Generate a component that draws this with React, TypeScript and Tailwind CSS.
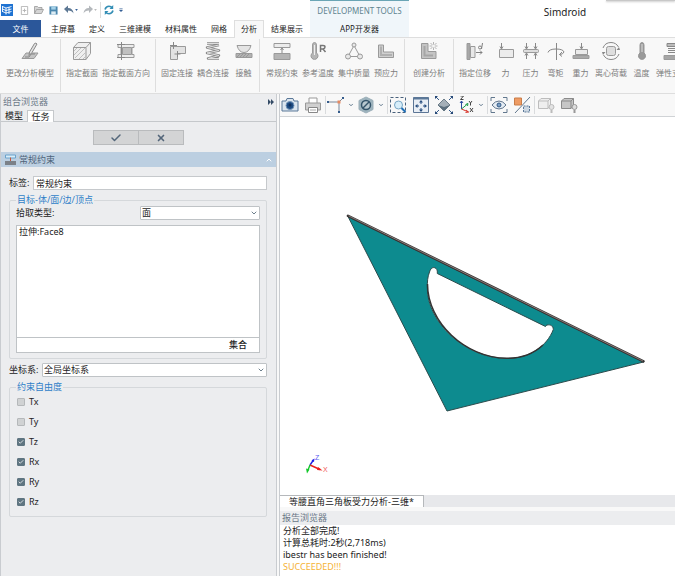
import { useState } from "react";
import type { ReactNode } from "react";
import clsx from "clsx";
import { Check, ChevronDown, ChevronUp, X } from "lucide-react";

const TABS = ["主屏幕", "定义", "三维建模", "材料属性", "网格", "分析", "结果展示"];

type Tool = { label: string; icon: ReactNode };

function Glyph({ children }: { children: ReactNode }) {
  return (
    <svg viewBox="0 0 20 20" className="size-5 shrink-0" fill="none" stroke="#9a9a9a" strokeWidth="1">
      {children}
    </svg>
  );
}

const GROUPS: { pad: string; tools: Tool[] }[] = [
  {
    pad: "px-[4px]",
    tools: [
      {
        label: "更改分析模型",
        icon: (
          <Glyph>
            <path d="M2 17.500 6 12h12l-4 5.500z" fill="#c4c4c4" />
            <path d="M5 16h4l2-3h4" stroke="#888" />
            <path d="m9 14.500.5-3.500L14.500 2.500q1.500-1 2.500.5L12 11.500z" fill="#e2e2e2" stroke="#888" />
          </Glyph>
        ),
      },
    ],
  },
  {
    pad: "px-[3px]",
    tools: [
      {
        label: "指定截面",
        icon: (
          <Glyph>
            <path d="M1.500 6.500 6 1.500h12.500v11L14 18.500H1.500z" fill="#efefef" />
            <path d="M1.500 6.500H14v12M14 6.500l4.500-5" />
            <path d="m2 10 3-3M2 14l7-7M3 17l10-10M7 18l7-7M11 18l3-3" stroke="#c0c0c0" />
          </Glyph>
        ),
      },
      {
        label: "指定截面方向",
        icon: (
          <Glyph>
            <path d="M2 3.500h16v3h-2v7h2v3H2v-3h3v-7H2z" fill="#ededed" />
            <path d="M6.500 6.500h9v7h-9z" fill="#c0c0c0" />
            <path d="M5.500 1v18M1 16.500h8M1 3.500h8" stroke="#888" />
          </Glyph>
        ),
      },
    ],
  },
  {
    pad: "px-[3px]",
    tools: [
      {
        label: "固定连接",
        icon: (
          <Glyph>
            <path d="M3.500 5.500h15v7h-8v6h-7z" fill="#e2e2e2" />
            <path d="M6.500 1v7M3 4.500h7M10.500 10v6M7.500 13h6" stroke="#888" />
          </Glyph>
        ),
      },
      {
        label: "耦合连接",
        icon: (
          <Glyph>
            <path d="M4 2.500h12M16 4 4 6.500l12 3L4 12l12 2.500L5 17.500h11" stroke="#8a8a8a" strokeWidth="2.500" strokeLinejoin="round" />
            <path d="M4 2.500h12M16 4 4 6.500l12 3L4 12l12 2.500L5 17.500h11" stroke="#ddd" strokeWidth="1" />
          </Glyph>
        ),
      },
      {
        label: "接触",
        icon: (
          <Glyph>
            <path d="M3 4.500h14q-2 7-7 7t-7-7z" fill="#e4e4e4" />
            <path d="M2 12.500h16v4H2z" fill="#b2b2b2" />
            <path d="m3 16 3-3m0 3 3-3m0 3 3-3m0 3 3-3" stroke="#999" />
          </Glyph>
        ),
      },
    ],
  },
  {
    pad: "px-[4px]",
    tools: [
      {
        label: "常规约束",
        icon: (
          <Glyph>
            <path d="M2 2.500h16v4H2z" fill="#ececec" />
            <path d="M2 12.500h16v6H2z" fill="#b4b4b4" />
            <path d="M10 12V7.500M8.500 9 10 7l1.500 2" stroke="#888" />
          </Glyph>
        ),
      },
      {
        label: "参考温度",
        icon: (
          <Glyph>
            <path d="M4.500 4q0-2.500 2-2.500t2 2.500v8a3.500 3.500 0 1 1-4 0z" fill="#b5b5b5" />
            <path d="M6.500 4v10" stroke="#eee" />
            <path d="M12.500 11V4.500h2.500q2 0 2 1.500t-2 2h-2.500M15 8l2.500 3" stroke="#777" strokeWidth="1.500" />
          </Glyph>
        ),
      },
      {
        label: "集中质量",
        icon: (
          <Glyph>
            <path d="m10 4.500-6 11h12z" />
            <circle cx="10" cy="4" r="2" fill="#e8e8e8" />
            <circle cx="4" cy="15.500" r="2.500" fill="#e8e8e8" />
            <circle cx="16" cy="15.500" r="2.500" fill="#e8e8e8" />
          </Glyph>
        ),
      },
      {
        label: "预应力",
        icon: (
          <Glyph>
            <path d="M2.500 4h5v7h10v5.500h-15z" fill="#d0d0d0" />
            <path d="M5 5.500v8.500h11" stroke="#b0b0b0" strokeWidth="2" />
          </Glyph>
        ),
      },
    ],
  },
  {
    pad: "px-[6px]",
    tools: [
      {
        label: "创建分析",
        icon: (
          <Glyph>
            <path d="M2.500 2.500H9v8h8v7H2.500z" fill="#c4c4c4" />
            <path d="M5.500 5v9.500H14" stroke="#a6a6a6" strokeWidth="2" />
            <path d="M14.500 1v8M10.500 5h8M11.500 2l6 6M17.500 2l-6 6" stroke="#b4b4b4" />
            <circle cx="14.500" cy="5" r="1.500" fill="#f5f5f5" stroke="none" />
          </Glyph>
        ),
      },
    ],
  },
  {
    pad: "px-[3px]",
    tools: [
      {
        label: "指定位移",
        icon: (
          <Glyph>
            <path d="M2 2.500h3v16H2z" fill="#a8a8a8" />
            <path d="M5.500 5.500H10v11H5.500z" fill="#e8e8e8" />
            <path d="M11 11.500h6M15 9.500l2 2-2 2M17.500 2l-1 6" stroke="#808080" />
            <circle cx="15" cy="6.500" r="1.500" stroke="#808080" />
          </Glyph>
        ),
      },
      {
        label: "力",
        icon: (
          <Glyph>
            <path d="M3.500 8.500h14v8h-14z" fill="#ececec" />
            <path d="M5.500 2v5M4 5.500 5.500 8 7 5.500" stroke="#888" />
          </Glyph>
        ),
      },
      {
        label: "压力",
        icon: (
          <Glyph>
            <rect x="2.500" y="8.500" width="15" height="3" rx="1" fill="#ddd" />
            <path d="M5.500 2v5M4 5.500 5.500 8 7 5.500M14.500 2v5M13 5.500 14.500 8 16 5.500M5.500 18v-5M4 14.500 5.500 12 7 14.500M14.500 18v-5M13 14.500l1.500-2.500 1.500 2.500" stroke="#888" />
          </Glyph>
        ),
      },
      {
        label: "弯矩",
        icon: (
          <Glyph>
            <path d="M10.500 2v17" stroke="#888" />
            <path d="M2 11.500Q3 8 10 8t8 3q-1 2.500-4.500 2.500M16 11l-2.500 2.500 2.500 2" stroke="#888" />
          </Glyph>
        ),
      },
      {
        label: "重力",
        icon: (
          <Glyph>
            <path d="M2 14.500h16v3H2z" fill="#aaa" />
            <path d="M4.500 8.500h12v5h-12z" fill="#ebebeb" />
            <path d="M10.500 2v5M9 5.500 10.500 8 12 5.500" stroke="#888" />
          </Glyph>
        ),
      },
      {
        label: "离心荷载",
        icon: (
          <Glyph>
            <rect x="5.500" y="5.500" width="9" height="9" rx="2" fill="#dedede" />
            <path d="M2 7q2-5.500 8-5.500 5 0 7.500 4.500M18 13q-2 5.500-8 5.500-5 0-7.500-4.500" stroke="#888" />
            <path d="M1 11h3.500L2 14zM19 9h-3.500L18 6z" fill="#888" stroke="none" />
          </Glyph>
        ),
      },
      {
        label: "温度",
        icon: (
          <Glyph>
            <path d="M8 4q0-2.500 2-2.500T12 4v8a3.500 3.500 0 1 1-4 0z" fill="#9a9a9a" stroke="#959595" />
            <path d="M10 3v8" stroke="#ddd" />
          </Glyph>
        ),
      },
      {
        label: "弹性支撑",
        icon: (
          <Glyph>
            <path d="M2 14.500h16v4H2z" fill="#a6a6a6" />
            <path d="M5 2.500h10v3H5zM6 7.500h8M6 9.500h8M6 11.500h8" fill="#bbb" stroke="#888" />
          </Glyph>
        ),
      },
    ],
  },
];

function QuickAccess() {
  return (
    <div className="flex h-5 items-center text-[#5d7894]">
      <svg viewBox="0 0 12 12" className="ml-px size-3">
        <path d="M0 0h12v12H0z" fill="#1f73d2" />
        <path d="M1.500 2.500 5 4l5.500-1.500M1.500 5 5 6.500 10.500 5M1.500 7.500 5 9l5.500-1.500M5 4v6.500M8 3v7M1.500 2v6" fill="none" stroke="#fff" strokeWidth=".9" />
      </svg>
      <svg viewBox="0 0 10 10" className="ml-[7px] size-[9px]" fill="none" stroke="#b3b3b3">
        <path d="M1.500.5h7v9h-7zM5 3v4M3 5h4" />
      </svg>
      <svg viewBox="0 0 10 10" className="ml-[5px] size-[10px]" fill="#d5d5d5" stroke="#999" strokeWidth=".8">
        <path d="M.5 8.500v-7h3l1 1H8v2M.5 8.500 2.500 4.500h7l-2 4z" />
      </svg>
      <svg viewBox="0 0 10 10" className="ml-[5px] size-[9px]">
        <path d="M.5.5h9v9h-9z" fill="#4a86ad" />
        <path d="M2.500.5h5V4h-5z" fill="#a4d1e8" />
        <path d="M2.500 6h5v3.500h-5z" fill="#dcecf4" />
      </svg>
      <svg viewBox="0 0 10 10" className="ml-[6px] size-[10px]" fill="currentColor">
        <path d="m0 4 4-3.500V3q5 0 5.500 5.500Q8 5.500 4 5.500V8z" />
      </svg>
      <Caret />
      <svg viewBox="0 0 10 10" className="ml-[5px] size-[10px]" fill="#b4b8bc">
        <path d="M10 4 6 .5V3Q1 3 .5 8.500 2 5.500 6 5.500V8z" />
      </svg>
      <Caret faded />
      <span className="ml-[3px] h-4 w-px bg-[#dcdcdc]" />
      <svg viewBox="0 0 10 10" className="ml-[3px] size-[10px]" fill="none" stroke="#338eb5" strokeWidth="1.600">
        <path d="M1 4.500Q2 1.300 5 1.300q2 0 3.500 1.800M9 5.500Q8 8.700 5 8.700q-2 0-3.500-1.800" />
        <path d="M9.200 0v4H5.500zM.8 10V6h3.700z" fill="#338eb5" stroke="none" />
      </svg>
      <svg viewBox="0 0 5 6" className="ml-[5px] h-[6px] w-[4px]" fill="#345f96">
        <path d="M.5 1h4v1h-4zM0 3h5L2.500 5.500z" />
      </svg>
    </div>
  );
}

function Caret({ faded }: { faded?: boolean }) {
  return (
    <svg viewBox="0 0 4 3" className="ml-px h-[2px] w-[3px]" fill={faded ? "#bbb" : "#345f96"}>
      <path d="M0 0h4L2 3z" />
    </svg>
  );
}

function Header() {
  const [active, setActive] = useState("分析");
  return (
    <header className="relative flex h-[37px] shrink-0 bg-white text-[8px] leading-3 text-[#222]">
      <div className="flex shrink-0 flex-col">
        <QuickAccess />
        <nav className="flex h-[17px]">
          <button className="mr-[3px] w-[41px] bg-[#2b579a] text-white">文件</button>
          {TABS.map((tab) => (
            <button
              key={tab}
              onClick={() => setActive(tab)}
              className={clsx("relative px-[7px]", tab === active && "z-10 h-[18px] bg-[#f8f8f8] shadow-[inset_1px_1px_#dedede,inset_-1px_0_#dedede]")}
            >
              {tab}
            </button>
          ))}
        </nav>
      </div>
      <div className="flex w-[99px] shrink-0 flex-col items-center border-t border-[#6aa5b5] bg-[#f0f6fa]">
        <span className="pt-[4px] pb-[6px] text-[#5f8490]">DEVELOPMENT TOOLS</span>
        <button>APP开发器</button>
      </div>
      <h1 className="flex-1 pt-[6px] pr-6 pl-[70px] text-center text-[10px]">Simdroid</h1>
      <div className="absolute top-0 right-0 h-px w-[69px] bg-[#c8c8c8] shadow-[0_1px_2px_#bbb]" />
    </header>
  );
}

function Ribbon() {
  return (
    <div className="flex h-[57px] shrink-0 overflow-hidden border-y border-[#dedede] bg-[#f8f8f8]">
      {GROUPS.map((group, i) => (
        <div key={i} className={clsx("my-px flex shrink-0 border-r border-[#dedede]", group.pad)}>
          {group.tools.map((tool) => (
            <button key={tool.label} className="flex min-w-[25px] flex-col items-center px-[2px] pt-[2px] text-[8px] leading-3 whitespace-nowrap text-[#7d7d7d]">
              {tool.icon}
              <span className="mt-[6px]">{tool.label}</span>
            </button>
          ))}
        </div>
      ))}
    </div>
  );
}

function Dropdown({ id, options, className }: { id: string; options: string[]; className: string }) {
  return (
    <div className={clsx("relative h-[14px]", className)}>
      <select id={id} className="h-full w-full appearance-none rounded-[1px] border border-[#bfc3c6] bg-white pl-px leading-3">
        {options.map((o) => (
          <option key={o}>{o}</option>
        ))}
      </select>
      <ChevronDown className="pointer-events-none absolute top-[3px] right-[2px] size-2 text-[#6d7f8c]" strokeWidth={3} />
    </div>
  );
}

function TaskPanel() {
  const [dof, setDof] = useState<Record<string, boolean>>({ Tx: false, Ty: false, Tz: true, Rx: true, Ry: true, Rz: true });

  return (
    <aside className="flex w-[277px] shrink-0 flex-col border-x border-[#c9ccd0] bg-[#ecedef] text-[9px] leading-3 text-[#222]">
      <div className="flex h-4 items-center justify-between px-[2px] text-[#6b7887]">
        <h2>组合浏览器</h2>
        <button aria-label="收起" className="text-[#344b66]">
          <svg viewBox="0 0 6 6" className="size-[6px]" fill="currentColor">
            <path d="M0 0l3 3-3 3zM3 0l3 3-3 3z" />
          </svg>
        </button>
      </div>
      <div className="flex h-3 border-b border-[#c5c8cb]">
        <button className="w-[26px]">模型</button>
        <button className="h-3 w-[27px] border border-b-0 border-[#c5c8cb] bg-white">任务</button>
      </div>

      <div className="mt-2 flex justify-center">
        <button aria-label="确定" className="flex h-[15px] w-[46px] items-center justify-center border border-[#b9bbbd] bg-[#d3d4d5] text-[#53667a]">
          <Check className="size-3" strokeWidth={3} />
        </button>
        <button aria-label="取消" className="flex h-[15px] w-[45px] items-center justify-center border border-l-0 border-[#b9bbbd] bg-[#d3d4d5] text-[#53667a]">
          <X className="size-[10px]" strokeWidth={4} />
        </button>
      </div>

      <div className="mt-[7px] flex h-[15px] items-center bg-[#bccfe1] pr-[3px] pl-1 text-[#4f647a]">
        <svg viewBox="0 0 11 11" className="mr-[3px] size-[11px]">
          <path d="M.5 1h10v3H.5z" fill="#d9edf8" stroke="#6aa2cc" />
          <path d="M0 7h11v4H0z" fill="#7b8188" />
          <path d="M5.500 7V3.500" stroke="#c4583c" />
        </svg>
        <h3 className="flex-1">常规约束</h3>
        <ChevronUp className="size-2 text-white" strokeWidth={3} />
      </div>

      <div className="mt-[9px] flex items-center pr-[9px] pl-2">
        <label htmlFor="tag" className="w-6">标签:</label>
        <input id="tag" defaultValue="常规约束" className="h-[14px] min-w-0 flex-1 border border-[#c6c9cc] bg-white px-[2px]" />
      </div>

      <fieldset className="mr-[9px] ml-2 mt-1 min-w-0 rounded-[2px] border border-[#d5d8db] px-[6px] pb-[5px]">
        <legend className="px-px text-[#2f7fc8]">目标-体/面/边/顶点</legend>
        <div className="flex items-center justify-between">
          <label htmlFor="pick">拾取类型:</label>
          <Dropdown id="pick" options={["面", "边", "顶点"]} className="w-[120px]" />
        </div>
        <div className="mt-[5px] border border-[#bfc3c6] bg-white">
          <ul className="h-[112px] border-b border-[#bfc3c6] px-[2px]">
            <li>拉伸:Face8</li>
          </ul>
          <div className="flex h-[14px] justify-end pr-3">
            <button className="font-medium">集合</button>
          </div>
        </div>
      </fieldset>

      <div className="mt-1 flex items-center pr-[9px] pl-2">
        <label htmlFor="csys" className="w-[33px]">坐标系:</label>
        <Dropdown id="csys" options={["全局坐标系"]} className="min-w-0 flex-1" />
      </div>

      <fieldset className="mr-[9px] ml-2 mt-1 min-w-0 rounded-[2px] border border-[#d5d8db] px-[6px] pb-[3px]">
        <legend className="px-px text-[#2f7fc8]">约束自由度</legend>
        {Object.entries(dof).map(([name, on]) => (
          <label key={name} className="flex h-5 items-center gap-1 pb-[2px] pl-px">
            <span className="relative flex size-2">
              <input
                type="checkbox"
                checked={on}
                onChange={() => setDof({ ...dof, [name]: !on })}
                className="size-2 appearance-none rounded-[1px] border border-[#b5b8ba] bg-[#d0d2d3] checked:border-[#5f7581] checked:bg-[#5f7581]"
              />
              {on && <Check className="pointer-events-none absolute inset-px size-[6px] text-white" strokeWidth={3} />}
            </span>
            {name}
          </label>
        ))}
      </fieldset>
    </aside>
  );
}

function ViewIcon({ label, children }: { label: string; children: ReactNode }) {
  return (
    <button aria-label={label} className="shrink-0">
      <svg viewBox="0 0 18 18" className="size-[18px]" fill="none" stroke="#5b7898">
        {children}
      </svg>
    </button>
  );
}

const Sep = () => <span className="mx-px h-[18px] w-px shrink-0 bg-[#d9dbdd]" />;
const More = () => <ChevronDown className="ml-[3px] size-[6px] shrink-0 text-[#62788e]" strokeWidth={4} />;

function ViewToolbar() {
  return (
    <div className="flex h-[22px] shrink-0 items-center bg-[#f8f8f8]">
      <span className="w-px" />
      <ViewIcon label="截图">
        <path d="M1 5h4l1-2.500h6L13 5h4v10H1z" fill="#dce6ef" />
        <circle cx="9" cy="9.500" r="4" fill="#1d4b82" stroke="#7696b8" />
        <circle cx="9" cy="9" r="1.500" fill="#11305c" stroke="none" />
      </ViewIcon>
      <span className="w-[5px]" />
      <ViewIcon label="打印">
        <path d="M5 7V2h8v5" fill="#fff" stroke="#999" />
        <path d="M1.500 7h15v7h-15z" fill="#d0d0d0" stroke="#999" />
        <path d="M4.500 11.500h9v5h-9z" fill="#fff" stroke="#888" />
        <path d="M6 14h6" stroke="#aaa" />
      </ViewIcon>
      <span className="w-[2px]" />
      <Sep />
      <ViewIcon label="坐标轴">
        <path d="M1 6h11v11M12 6l4.500-4.500" stroke="#7b8798" />
        <path d="M0 5h2v2H0zM11 15h2v2h-2zM15 1h2v2h-2z" fill="#345c8c" stroke="none" />
        <path d="M10.500 4.500h3v3h-3z" fill="#e68a62" stroke="none" />
      </ViewIcon>
      <More />
      <span className="w-[3px]" />
      <ViewIcon label="隐藏">
        <path d="m9 1 7 3.500v9L9 17l-7-3.500v-9z" fill="#9eb4be" stroke="#9cafb9" />
        <circle cx="9" cy="9" r="4.500" fill="#b8c8cf" stroke="#34546a" strokeWidth="1.500" />
        <path d="m6 12 6-6" stroke="#34546a" strokeWidth="1.500" />
      </ViewIcon>
      <More />
      <span className="w-[2px]" />
      <Sep />
      <ViewIcon label="框选缩放">
        <path d="M1.500 1.500h15v15h-15z" stroke="#49617c" strokeDasharray="3 2" />
        <circle cx="9.500" cy="9" r="4" fill="#d7eefa" stroke="#78a6c5" />
        <path d="m12.500 12 4 4" stroke="#1e70b8" strokeWidth="2" />
      </ViewIcon>
      <span className="w-[5px]" />
      <ViewIcon label="适合窗口">
        <path d="M1.500 1.500h15v15h-15z" fill="#e8eef5" stroke="#5c7696" />
        <path d="M1.500 2.500h15" strokeWidth="2" />
        <path d="M9 4l2 2.500H7zM9 16l2-2.500H7zM3 10l2.500-2v4zM15 10l-2.500-2v4z" fill="#284f80" stroke="none" />
        <path d="M9 5v3m0 4v3M4 10h3m4 0h3" stroke="#284f80" />
      </ViewIcon>
      <span className="w-[5px]" />
      <ViewIcon label="全部显示">
        <path d="m9 3 6 6-6 6-6-6z" fill="#a5b0b8" stroke="#6d7d88" />
        <path d="m3 9 6 2 6-2-6 6z" fill="#5d707e" stroke="none" />
        <path d="m1 1 3 3M17 1l-3 3M1 17l3-3m13 3-3-3" stroke="#355b8c" />
        <path d="M0 0h3L0 3zM18 0v3l-3-3zM0 18v-3l3 3zM18 18h-3l3-3z" fill="#274a78" stroke="none" />
      </ViewIcon>
      <span className="w-[4px]" />
      <ViewIcon label="视图方向">
        <path d="M4.500 13V5M3 7l1.500-2L6 7" stroke="#2c4ba0" />
        <path d="m4.500 13 6-5M8.500 8.500l2.500-1-.5 2.500" stroke="#1e9c4a" />
        <path d="m4.500 13 7 3M9 14l2.500 2-3 .5" stroke="#d8352b" />
        <path d="M3.500 0h3l-3 3.500h3M12 5l1.500 2L15 5m-1.500 2v2.500M13 12l3 4m0-4-3 4" stroke="#444" />
      </ViewIcon>
      <More />
      <span className="w-[2px]" />
      <Sep />
      <span className="w-px" />
      <ViewIcon label="可见性">
        <path d="M1 5V1.500h4M13 1.500h4V5M17 13v3.500h-4M5 16.500H1V13" stroke="#62788e" />
        <path d="M2 9q3-4 7-4t7 4q-3 4-7 4T2 9z" fill="#e6edf4" stroke="#60758c" />
        <circle cx="9" cy="9" r="2" fill="#7ba0c5" stroke="#355b86" />
      </ViewIcon>
      <span className="w-[5px]" />
      <ViewIcon label="反转可见">
        <path d="M1.500 2h7v7h-7z" fill="#ee9b63" stroke="#c97d49" />
        <path d="M10.500 10h6v6h-6z" fill="#ccd7e2" strokeDasharray="2 1" />
        <path d="M17 1 2 17" stroke="#62788e" />
      </ViewIcon>
      <span className="w-[2px]" />
      <Sep />
      <span className="w-px" />
      <ViewIcon label="显示体">
        <path d="M1.500 5 4 2.500h9.500V9L11 12.500H1.500zM1.500 5H11v7.500M11 5l2.500-2.500" fill="#eee" stroke="#bdbdbd" />
        <circle cx="14.500" cy="11" r="2.500" fill="#e2e2e2" stroke="#bbb" />
        <path d="M13.500 14h2v3h-2z" fill="#bbb" stroke="none" />
      </ViewIcon>
      <span className="w-[5px]" />
      <ViewIcon label="隐藏体">
        <path d="M1.500 5 4 2.500h9.500V9L11 12.500H1.500zM1.500 5H11v7.500M11 5l2.500-2.500" fill="#c6c6c6" stroke="#8b8b8b" />
        <circle cx="14.500" cy="11" r="2.500" fill="#ddd" stroke="#999" />
        <path d="M13.500 14h2v3h-2z" fill="#999" stroke="none" />
      </ViewIcon>
    </div>
  );
}

// set square with the half-round cutout, plus the axis triad
function Scene() {
  return (
    <svg viewBox="280 117 395 378" className="h-full w-full" strokeLinejoin="round">
      <path
        d="M348 216.500 643.500 362 447 411zM429.500 272C427.500 277 427.300 282 427.300 288C427 322 465 358 506.700 358.500C530 358.500 547 346 553.300 329.500C553.500 325 548.500 324 546 325.500L545.500 326.500 437.300 273.500V271C436.500 266.500 431 266 429.500 272z"
        fill="#0d8b8f"
        fillRule="evenodd"
        stroke="#2c4b4c"
        strokeWidth="1"
      />
      <path d="M348 215.800 643.500 361.300" stroke="#373333" strokeWidth="2.600" strokeLinecap="round" />
      <path d="M348.500 215.800 643 361" stroke="#867b78" strokeWidth="1" />
      <path d="M427.500 284C427.500 322 465 358 506.700 358.300C522 358.300 535 352.500 543 345" fill="none" stroke="#333" strokeWidth="1.500" />
      <g strokeWidth="1.400" fontFamily="Liberation Sans, sans-serif" fontSize="7">
        <path d="m310 465 3.500-5" stroke="#1c1ce8" />
        <path d="m311.500 460.500 3-2-.5 3.500z" fill="#1c1ce8" />
        <path d="m310 465 10 4.500" stroke="#ee1c1c" />
        <path d="m318 467 4.500 3.500-5.500-.5z" fill="#ee1c1c" />
        <path d="m310 465-2 5" stroke="#12c82a" />
        <path d="m306 468.500 3.500 1-2.500 4z" fill="#12c82a" />
        <text x="315" y="460" fill="#5a5af0">Z</text>
        <text x="323" y="472" fill="#f05a5a">X</text>
      </g>
    </svg>
  );
}

function Workspace() {
  return (
    <main className="ml-[2px] flex min-w-0 flex-1 flex-col border-l border-[#c9ccd0] text-[9px] leading-3 text-[#222]">
      <ViewToolbar />
      <div className="min-h-0 flex-1 border-t border-[#d0d3d6] bg-white">
        <Scene />
      </div>
      <div className="flex h-3 shrink-0 bg-[#e7e8eb]">
        <button className="w-[144px] border-t border-r border-[#b5b8bb] bg-white">等腰直角三角板受力分析-三维*</button>
      </div>
      <h2 className="mt-1 h-[14px] shrink-0 bg-[#ecedef] pt-px pl-[2px] text-[#6b7887]">报告浏览器</h2>
      <div className="h-[51px] shrink-0 bg-white pl-[3px]">
        <p>分析全部完成!</p>
        <p>计算总耗时:2秒(2,718ms)</p>
        <p>ibestr has been finished!</p>
        <p className="text-[#f5b236]">SUCCEEDED!!!</p>
      </div>
    </main>
  );
}

export default function App() {
  return (
    <div className="flex h-screen flex-col overflow-hidden bg-[#f8f8f8] font-['Noto_Sans','Noto_Sans_CJK_SC',sans-serif]">
      <Header />
      <Ribbon />
      <div className="flex min-h-0 flex-1">
        <TaskPanel />
        <Workspace />
      </div>
    </div>
  );
}
